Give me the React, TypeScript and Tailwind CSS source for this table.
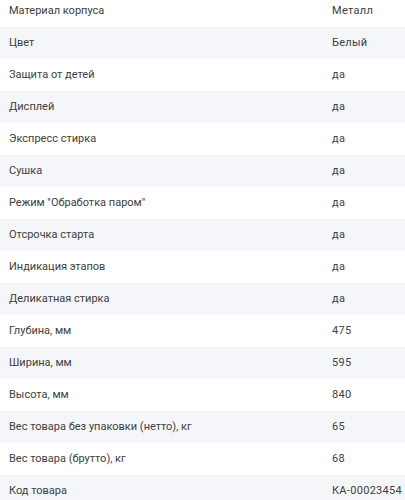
const specs: [string, string][] = [
  ["Материал корпуса", "Металл"],
  ["Цвет", "Белый"],
  ["Защита от детей", "да"],
  ["Дисплей", "да"],
  ["Экспресс стирка", "да"],
  ["Сушка", "да"],
  ["Режим \"Обработка паром\"", "да"],
  ["Отсрочка старта", "да"],
  ["Индикация этапов", "да"],
  ["Деликатная стирка", "да"],
  ["Глубина, мм", "475"],
  ["Ширина, мм", "595"],
  ["Высота, мм", "840"],
  ["Вес товара без упаковки (нетто), кг", "65"],
  ["Вес товара (брутто), кг", "68"],
  ["Код товара", "КА-00023454"],
];

export default function App() {
  return (
    <div className="h-[500px] w-[405px] overflow-hidden bg-white font-['Roboto',sans-serif] text-[11px] text-[#404040]">
      <div className="-mt-[5px]">
        {specs.map(([k, v], i) => (
          <div key={k} className={`flex h-8 items-center ${i % 2 === 1 ? "bg-[#f5f6f9]" : "bg-white"}`}>
            <span className="w-[332px] shrink-0 pl-[9px]">{k}</span>
            <span className="whitespace-nowrap tracking-[0.3px]">{v}</span>
          </div>
        ))}
      </div>
    </div>
  );
}
